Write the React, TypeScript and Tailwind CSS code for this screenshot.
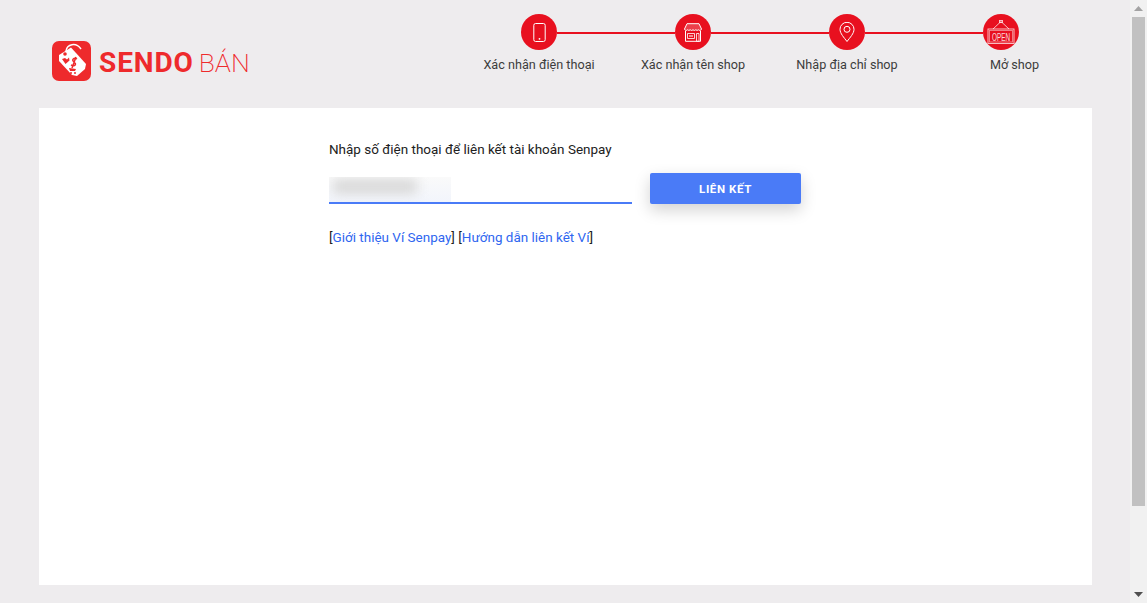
import React from 'react'

const font = { fontFamily: 'Roboto, "Noto Sans", sans-serif' }

function PhoneIcon() {
  return (
    <svg width="13" height="19" viewBox="0 0 13 19" fill="none" stroke="white" strokeWidth="1">
      <rect x="0.8" y="0.5" width="11.400" height="18" rx="1.800" />
      <circle cx="6.500" cy="15.800" r="0.900" fill="white" stroke="none" />
    </svg>
  )
}

function StoreIcon() {
  return (
    <svg width="18" height="19" viewBox="0 0 18 19" fill="none" stroke="white" strokeWidth="1">
      <path d="M3 0.700h12l2.500 5.300a1.700 1.700 0 0 1-3 .8 2 2 0 0 1-2.700 0 2 2 0 0 1-2.800 0 2 2 0 0 1-2.800 0 2 2 0 0 1-2.700 0 1.700 1.700 0 0 1-3-.8z" fill="white" fillOpacity="0.2" />
      <path d="M1.500 8v10.300h15V8" />
      <path d="M3.500 10.500h7v5h-7z" strokeOpacity="0.8" />
      <path d="M12.500 10.500h2.500v7.800h-2.500z" strokeOpacity="0.8" />
      <path d="M5 13h4" />
    </svg>
  )
}

function PinIcon() {
  return (
    <svg width="16" height="20" viewBox="0 0 16 20" fill="none" stroke="white" strokeWidth="1">
      <path d="M8 19.500C5 15.500 1 11.500 1 7.300a7 7 0 0 1 14 0c0 4.200-4 8.200-7 12.200z" />
      <circle cx="8" cy="7.300" r="3" />
    </svg>
  )
}

function OpenIcon() {
  return (
    <svg width="28" height="24" viewBox="0 0 28 24" fill="none" stroke="white" strokeWidth="0.9" strokeOpacity="0.8" className="overflow-visible">
      <path d="M6 9L14 1.500 22 9" />
      <rect x="12.500" y="0.500" width="3" height="2" />
      <rect x="1" y="9" width="26" height="14.500" />
      <rect x="2.500" y="10.500" width="23" height="11.500" strokeOpacity="0.5" />
      <text x="14" y="20.500" textAnchor="middle" fontSize="10" fill="white" fillOpacity="0.85" stroke="none" textLength="18" lengthAdjust="spacingAndGlyphs" style={{ fontFamily: '"Liberation Sans", sans-serif' }}>OPEN</text>
    </svg>
  )
}

function SendoLogo() {
  return (
    <svg width="39" height="40" viewBox="0 0 39 40" className="shrink-0">
      <rect width="39" height="40" rx="7" fill="#ee2a2c" />
      <path d="M14 10C15 3 24 1 29 8" fill="none" stroke="white" strokeWidth="1.500" />
      <path d="M7 14L19 6.500L34 23L33 28L25 35L20 34L7 20Z" fill="white" />
      <circle cx="13" cy="13" r="1.800" fill="#ee2a2c" />
      <path d="M10 18l3-1 2 1.500 2-2 .5 3-4 3.500z" fill="#ee2a2c" />
      <path d="M25 18c-3-2-6 1-3 3s1 5-3 3M24 16l-4 11" fill="none" stroke="#ee2a2c" strokeWidth="1.500" />
      <path d="M17 27l7 1-1 2-5 0z" fill="#ee2a2c" />
      <circle cx="19" cy="32" r="1" fill="#ee2a2c" />
      <circle cx="23" cy="32" r="1" fill="#ee2a2c" />
    </svg>
  )
}

const steps = [
  { label: 'Xác nhận điện thoại', icon: <PhoneIcon /> },
  { label: 'Xác nhận tên shop', icon: <StoreIcon /> },
  { label: 'Nhập địa chỉ shop', icon: <PinIcon /> },
  { label: 'Mở shop', icon: <OpenIcon /> },
]

function Stepper() {
  return (
    <div className="w-[616px] pt-[14px]">
      <div className="flex items-center pl-[59px]">
        {steps.map((s, i) => (
          <React.Fragment key={s.label}>
            <div className="w-[36px] h-[36px] rounded-full bg-[#e8101f] flex items-center justify-center shrink-0">
              {s.icon}
            </div>
            {i < 3 && <div className="w-[118px] h-[2px] mt-[2px] bg-[#e8101f]" />}
          </React.Fragment>
        ))}
      </div>
      <div className="flex mt-[7px] text-[12.650px] leading-[16px] text-[#3c3c3c]">
        {steps.map((s, i) => (
          <div key={s.label} className={i === 3 ? 'w-[154px] text-center pl-[27px]' : 'w-[154px] text-center'}>
            {s.label}
          </div>
        ))}
      </div>
    </div>
  )
}

export default function App() {
  return (
    <div className="h-[603px] flex overflow-hidden bg-[#eeecee]" style={font}>
      <div className="flex-1 min-w-0">
        <header className="h-[108px] flex">
          <div className="w-[462px] pl-[52px] pt-[41px]">
            <div className="flex items-start text-[#ee2a2c]">
              <SendoLogo />
              <span className="ml-[8px] text-[28px] leading-[44px] font-bold tracking-[0.9px]">SENDO</span>
              <span className="ml-[5px] text-[26.500px] leading-[44px] font-extralight">BÁN</span>
            </div>
          </div>
          <Stepper />
        </header>
        <main className="ml-[39px] w-[1053px] h-[477px] bg-white pl-[290px] pt-[32px]">
          <p className="text-[13.480px] leading-[18px] text-[#212121]">Nhập số điện thoại để liên kết tài khoản Senpay</p>
          <div className="flex mt-[9px]">
            <div className="w-[303px] h-[37px] border-b-2 border-[#4a7bf7]">
              <div className="w-[122px] h-[25px] mt-[10px] bg-gradient-to-b from-[#fafafa] to-[#f2f5fc] flex items-center overflow-hidden">
                <div className="w-[84px] h-[15px] ml-[4px] -mt-[6px] bg-[#d8d8d8] blur-[6px]" />
              </div>
            </div>
            <button className="ml-[18px] mt-[6px] w-[151px] h-[31px] pt-[2px] rounded-[2px] bg-[#4a7bf7] text-white text-[11.500px] font-bold tracking-[0.6px] shadow-[0_6px_16px_rgba(0,0,0,0.18)]">
              LIÊN KẾT
            </button>
          </div>
          <p className="mt-[24px] text-[13.480px] leading-[18px] text-[#212121]">
            [<a className="text-[#2f66f0]">Giới thiệu Ví Senpay</a>] [<a className="text-[#2f66f0]">Hướng dẫn liên kết Ví</a>]
          </p>
        </main>
      </div>
      <div className="w-[17px] bg-[#f1f1f1] flex flex-col items-center shrink-0">
        <div className="h-[17px] flex items-center justify-center">
          <svg width="9" height="5" viewBox="0 0 9 5"><path d="M4.500 0L9 5H0z" fill="#a3a3a3" /></svg>
        </div>
        <div className="w-[13px] h-[489px] bg-[#c1c1c1]" />
        <div className="flex-1" />
        <div className="h-[17px] flex items-center justify-center">
          <svg width="9" height="5" viewBox="0 0 9 5"><path d="M4.500 5L9 0H0z" fill="#505050" /></svg>
        </div>
      </div>
    </div>
  )
}
